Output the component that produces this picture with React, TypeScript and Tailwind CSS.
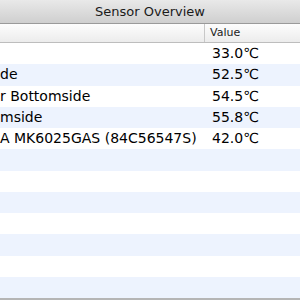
const rows: { name: string; value: string }[] = [
  { name: "", value: "33.0℃" },
  { name: "de", value: "52.5℃" },
  { name: "r Bottomside", value: "54.5℃" },
  { name: "mside", value: "55.8℃" },
  { name: "A MK6025GAS (84C56547S)", value: "42.0℃" },
  { name: "", value: "" },
  { name: "", value: "" },
  { name: "", value: "" },
  { name: "", value: "" },
  { name: "", value: "" },
  { name: "", value: "" },
  { name: "", value: "" },
];

export default function App() {
  return (
    <div
      className="flex flex-col w-[300px] h-[300px] bg-white overflow-hidden text-black"
      style={{ fontFamily: '"DejaVu Sans", "Liberation Sans", sans-serif' }}
    >
      <div className="h-[24px] flex items-center justify-center bg-gradient-to-b from-[#e9e9e9] to-[#cfcfcf] border-b border-[#9a9a9a] text-[13px] text-[#1a1a1a]">
        Sensor Overview
      </div>
      <div className="h-[19px] flex bg-gradient-to-b from-[#fdfdfd] to-[#ececec] border-b border-[#bdbdbd] text-[11px] text-[#222]">
        <div className="w-[205px] border-r border-[#c8c8c8]" />
        <div className="flex items-center pl-[5px]">Value</div>
      </div>
      <div className="flex-1 flex flex-col">
        {rows.map((r, i) => (
          <div
            key={i}
            className={`flex-1 flex items-center text-[14px] ${i % 2 === 1 ? "bg-[#edf3fe]" : "bg-white"}`}
          >
            <div className="w-[205px] whitespace-nowrap overflow-hidden">{r.name}</div>
            <div className="pl-[7px] whitespace-nowrap">{r.value}</div>
          </div>
        ))}
      </div>
      <div className="h-[2px] bg-[#b5b5b5]" />
    </div>
  );
}
